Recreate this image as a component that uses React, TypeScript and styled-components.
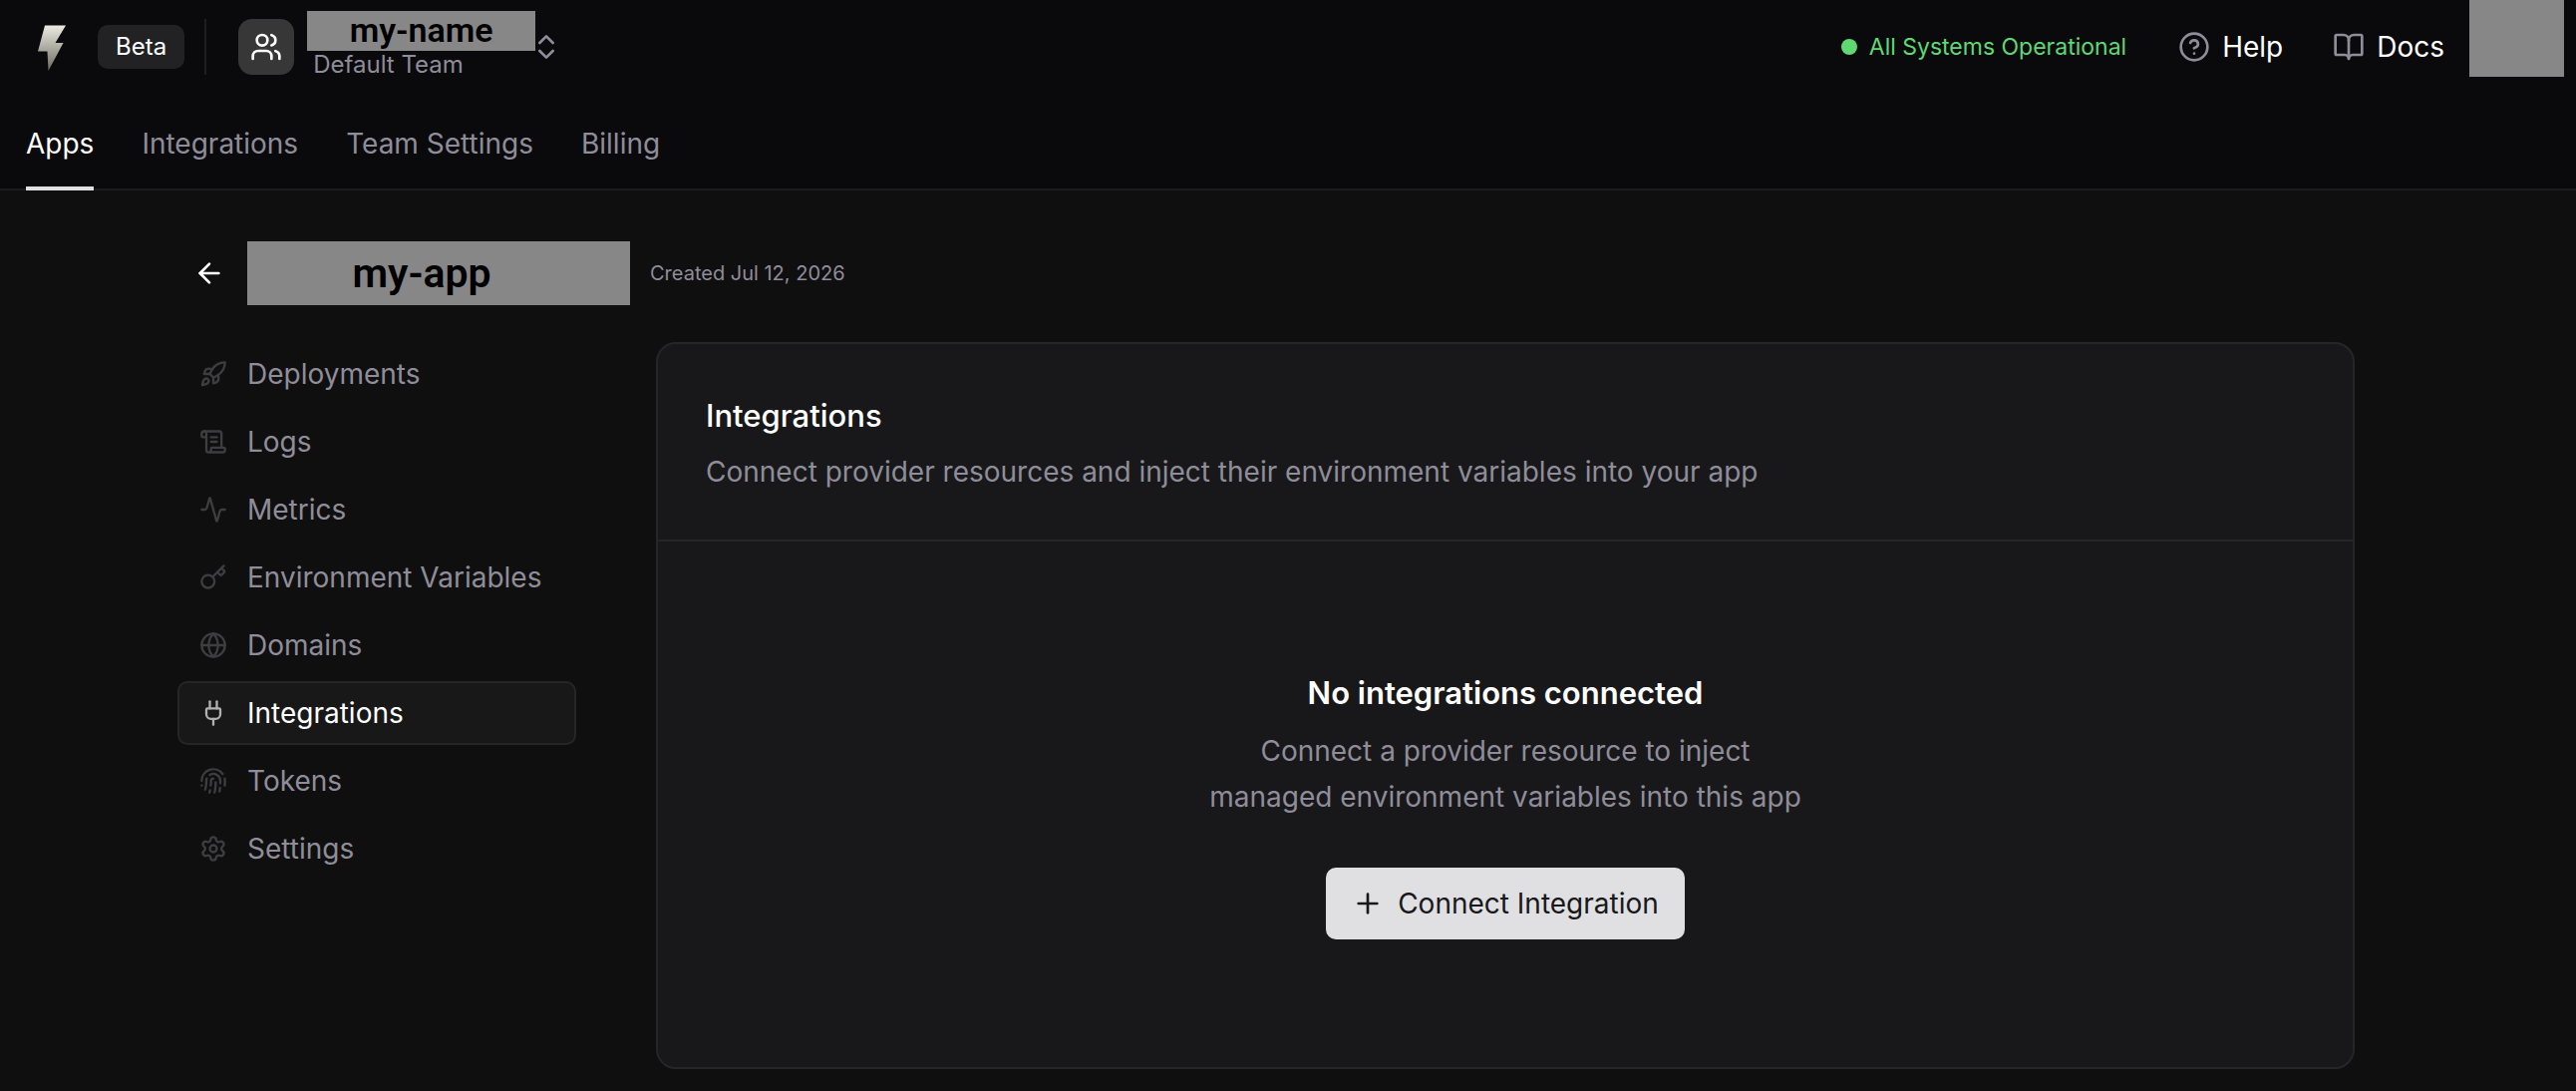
import React from 'react';
import styled, { createGlobalStyle, css } from 'styled-components';
import {
  Activity,
  ArrowLeft,
  BookOpen,
  ChevronsUpDown,
  CircleQuestionMark,
  Fingerprint,
  Globe,
  Key,
  Plug,
  Plus,
  Rocket,
  ScrollText,
  Settings,
  Users,
} from 'lucide-react';

const color = {
  page: '#0f0f0f',
  header: '#0a0a0c',
  card: '#18181a',
  line: '#262628',
  text: '#ffffff',
  muted: '#8f8d99',
  faint: '#3e3e41',
  mask: '#878787',
  green: '#5fd873',
};

const Global = createGlobalStyle`
  *, *::before, *::after { box-sizing: border-box; }
  html, body { margin: 0; background: ${color.page}; }
  body {
    color: ${color.text};
    font-family: Inter, 'Liberation Sans', sans-serif;
    font-size: 28px;
    line-height: 40px;
  }
  h1, h2, h3, p, ul { margin: 0; padding: 0; }
  ul { list-style: none; }
  a { color: inherit; text-decoration: none; }
  button { font: inherit; color: inherit; border: 0; padding: 0; background: none; cursor: pointer; }
  svg { display: block; flex: none; }
`;

const Header = styled.header`
  background: ${color.header};
  border-bottom: 2px solid #1c1c1e;
`;

const TopBar = styled.div`
  display: flex;
  align-items: center;
  height: 94px;
  padding: 0 12px 0 36px;
`;

const Badge = styled.span`
  margin-left: 30px;
  padding: 2px 18px;
  border-radius: 10px;
  background: #222224;
  font-size: 24px;
`;

const Separator = styled.span`
  width: 2px;
  height: 56px;
  margin: 0 32px 0 20px;
  background: #1e1e20;
`;

const TeamSwitcher = styled.button`
  display: flex;
  align-items: center;
  text-align: left;
`;

const TeamAvatar = styled.span`
  display: grid;
  place-items: center;
  width: 56px;
  height: 56px;
  margin-right: 13px;
  border-radius: 14px;
  background: #373737;
`;

const TeamText = styled.span`
  display: flex;
  flex-direction: column;
  padding-bottom: 4px;
`;

const TeamName = styled.span`
  width: 229px;
  height: 40px;
  background: ${color.mask};
  color: #000;
  font-family: Roboto, 'Liberation Sans', sans-serif;
  font-size: 34px;
  font-weight: 600;
  line-height: 38px;
  text-align: center;
`;

const TeamKind = styled.span`
  padding-left: 6px;
  color: ${color.muted};
  font-size: 24px;
  line-height: 28px;
`;

const SwitchIcon = styled(ChevronsUpDown)`
  margin-left: -5px;
  color: ${color.muted};
`;

const TopLinks = styled.div`
  display: flex;
  align-items: center;
  margin-left: auto;
  height: 100%;
`;

const Status = styled.a`
  display: flex;
  align-items: center;
  gap: 12px;
  margin-right: 52px;
  color: ${color.green};
  font-size: 23px;
`;

const Dot = styled.span`
  width: 16px;
  height: 16px;
  border-radius: 50%;
  background: ${color.green};
`;

const TopLink = styled.a`
  display: flex;
  align-items: center;
  gap: 12px;
  margin-right: 50px;
  svg { color: ${color.muted}; }
  &:last-of-type { margin-right: 25px; }
`;

const Account = styled.button`
  align-self: flex-start;
  width: 95px;
  height: 77px;
  background: ${color.mask};
`;

const Tabs = styled.nav`
  display: flex;
  gap: 48px;
  padding: 0 26px;
`;

const Tab = styled.a<{ $active?: boolean }>`
  height: 97px;
  margin-bottom: -2px;
  padding-top: 30px;
  color: ${(p) => (p.$active ? color.text : color.muted)};
  border-bottom: 4px solid ${(p) => (p.$active ? '#e0e0e2' : 'transparent')};
`;

const Page = styled.main`
  padding: 51px 222px 20px 178px;
`;

const AppHead = styled.div`
  display: flex;
  align-items: center;
  margin-bottom: 37px;
  padding-left: 16px;
`;

const Back = styled.a`
  margin-right: 22px;
`;

const AppName = styled.h1`
  width: 384px;
  height: 64px;
  padding-right: 34px;
  background: ${color.mask};
  color: #000;
  font-family: Roboto, 'Liberation Sans', sans-serif;
  font-size: 41px;
  font-weight: 600;
  line-height: 64px;
  text-align: center;
`;

const Created = styled.span`
  margin-left: 20px;
  color: ${color.muted};
  font-size: 20px;
`;

const Columns = styled.div`
  display: grid;
  grid-template-columns: 400px 1fr;
  gap: 80px;
  align-items: start;
`;

const SideList = styled.ul`
  display: grid;
  gap: 4px;
`;

const SideLink = styled.a<{ $active?: boolean }>`
  display: flex;
  align-items: center;
  gap: 20px;
  height: 64px;
  padding: 0 20px;
  border: 2px solid transparent;
  border-radius: 10px;
  color: ${color.muted};
  svg { color: ${color.faint}; }
  ${(p) =>
    p.$active &&
    css`
      color: ${color.text};
      background: #181818;
      border-color: #262626;
      svg { color: #b0b0b0; }
    `}
`;

const Card = styled.section`
  border: 2px solid ${color.line};
  border-radius: 20px;
  background: ${color.card};
`;

const CardHead = styled.div`
  display: grid;
  gap: 10px;
  padding: 49px 48px 45px;
  border-bottom: 2px solid ${color.line};
`;

const Heading = styled.h2<{ $bold?: boolean }>`
  font-size: 31px;
  font-weight: ${(p) => (p.$bold ? 600 : 500)};
  line-height: 46px;
`;

const Copy = styled.p`
  color: ${color.muted};
  line-height: 46px;
`;

const Empty = styled.div`
  display: flex;
  flex-direction: column;
  align-items: center;
  gap: 12px;
  padding: 129px 48px 128px;
  text-align: center;
`;

const Primary = styled.button`
  display: flex;
  align-items: center;
  gap: 14px;
  height: 72px;
  margin-top: 36px;
  padding: 0 26px;
  border-radius: 10px;
  background: #e0e0e2;
  color: #18181a;
`;

const Bolt = () => (
  <svg width="32" height="48" viewBox="0 0 32 48" role="img" aria-label="Home">
    <defs>
      <linearGradient id="bolt" x1="0" y1="0" x2="0" y2="1">
        <stop offset="0" stopColor="#ecebe2" />
        <stop offset="1" stopColor="#6b6a5e" />
      </linearGradient>
    </defs>
    <path d="M9 2.500H30L19.500 20H27.500L12.500 48L11.500 28.500H2Z" fill="url(#bolt)" />
  </svg>
);

const tabs = ['Apps', 'Integrations', 'Team Settings', 'Billing'];

const sections = [
  { label: 'Deployments', Icon: Rocket },
  { label: 'Logs', Icon: ScrollText },
  { label: 'Metrics', Icon: Activity },
  { label: 'Environment Variables', Icon: Key },
  { label: 'Domains', Icon: Globe },
  { label: 'Integrations', Icon: Plug },
  { label: 'Tokens', Icon: Fingerprint },
  { label: 'Settings', Icon: Settings },
];

export default function App() {
  return (
    <>
      <Global />
      <Header>
        <TopBar>
          <a href="#home"><Bolt /></a>
          <Badge>Beta</Badge>
          <Separator />
          <TeamSwitcher type="button">
            <TeamAvatar><Users size={32} /></TeamAvatar>
            <TeamText>
              <TeamName>my-name</TeamName>
              <TeamKind>Default Team</TeamKind>
            </TeamText>
            <SwitchIcon size={32} />
          </TeamSwitcher>
          <TopLinks>
            <Status href="#status"><Dot />All Systems Operational</Status>
            <TopLink href="#help"><CircleQuestionMark size={32} />Help</TopLink>
            <TopLink href="#docs"><BookOpen size={32} />Docs</TopLink>
            <Account type="button" aria-label="Account" />
          </TopLinks>
        </TopBar>
        <Tabs>
          {tabs.map((label) => (
            <Tab key={label} href="#tab" $active={label === 'Apps'}>{label}</Tab>
          ))}
        </Tabs>
      </Header>
      <Page>
        <AppHead>
          <Back href="#apps" aria-label="Back"><ArrowLeft size={32} /></Back>
          <AppName>my-app</AppName>
          <Created>Created Jul 12, 2026</Created>
        </AppHead>
        <Columns>
          <nav>
            <SideList>
              {sections.map(({ label, Icon }) => (
                <li key={label}>
                  <SideLink href="#section" $active={label === 'Integrations'}>
                    <Icon size={28} />
                    {label}
                  </SideLink>
                </li>
              ))}
            </SideList>
          </nav>
          <Card>
            <CardHead>
              <Heading>Integrations</Heading>
              <Copy>Connect provider resources and inject their environment variables into your app</Copy>
            </CardHead>
            <Empty>
              <Heading as="h3" $bold>No integrations connected</Heading>
              <Copy>
                Connect a provider resource to inject
                <br />
                managed environment variables into this app
              </Copy>
              <Primary type="button"><Plus size={32} />Connect Integration</Primary>
            </Empty>
          </Card>
        </Columns>
      </Page>
    </>
  );
}
